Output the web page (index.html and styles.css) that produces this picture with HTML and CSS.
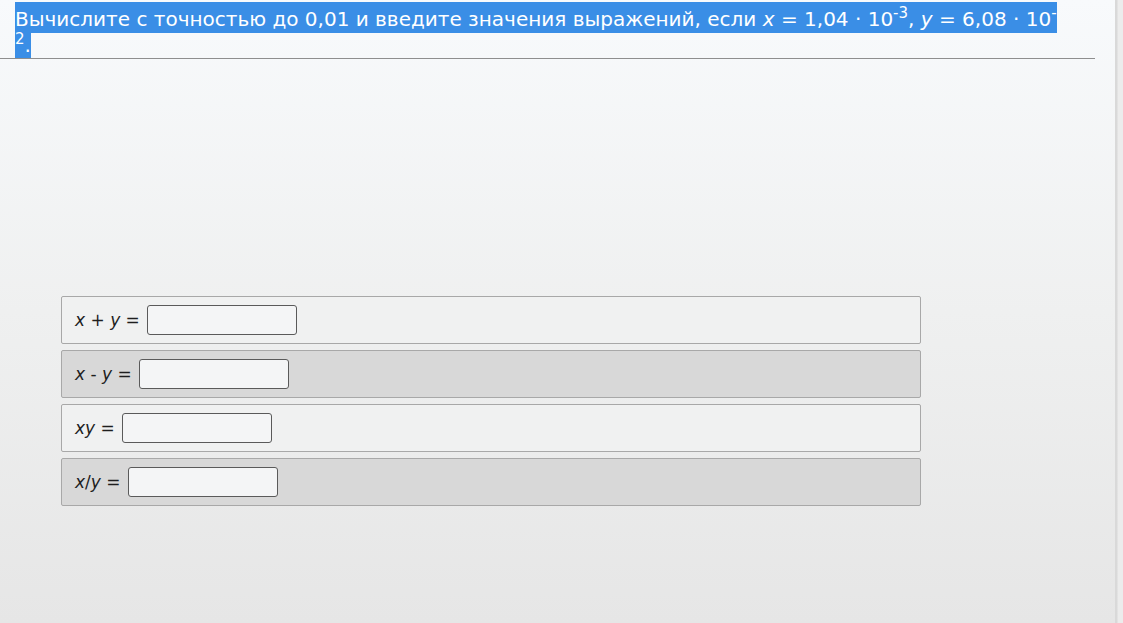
FILE: index.html
```html
<!DOCTYPE html>
<html lang="ru">
<head>
<meta charset="utf-8">
<title>Задание</title>
<link rel="stylesheet" href="styles.css">
</head>
<body>
<div class="page">
  <div class="content">
    <div class="question">
      <p class="task"><span class="sel">Вычислите с точностью до 0,01 и введите значения выражений, если <i>x</i> = 1,04 · 10<sup>-3</sup>, <i>y</i> = 6,08 · 10<sup>-<br>2</sup>.</span></p>
    </div>
    <div class="answers">
      <div class="row odd"><span class="label"><i>x</i> + <i>y</i> =</span><span class="field"></span></div>
      <div class="row even"><span class="label"><i>x</i> - <i>y</i> =</span><span class="field"></span></div>
      <div class="row odd"><span class="label"><i>xy</i> =</span><span class="field"></span></div>
      <div class="row even"><span class="label"><i>x</i>/<i>y</i> =</span><span class="field"></span></div>
    </div>
  </div>
  <div class="edge"></div>
</div>
</body>
</html>
```
FILE: styles.css
```css
html, body {
  margin: 0;
  padding: 0;
}
body {
  width: 1123px;
  height: 623px;
  overflow: hidden;
  font-family: "DejaVu Sans", Verdana, sans-serif;
  background: #e9e9e9;
}
.page {
  display: flex;
  height: 623px;
}
.content {
  width: 1115px;
  height: 623px;
  background: linear-gradient(to bottom, #f8fafc 0%, #eff0f0 50%, #e6e6e6 100%);
}
.edge {
  width: 8px;
  height: 623px;
  background: linear-gradient(to right, #d9d9d9 0, #d9d9d9 2px, #ececec 3px, #ececec 100%);
}
.question {
  width: 1095px;
  height: 59px;
  box-sizing: border-box;
  border-bottom: 1px solid #8e8e8e;
  padding: 0 0 0 15px;
  overflow: hidden;
}
.task {
  margin: 0;
  font-size: 20px;
  line-height: 26px;
  color: #ffffff;
  padding-top: 6px;
}
.sel {
  background: #3a8ee6;
  padding: 5px 0 2px 0;
}
.task sup {
  font-size: 15px;
  line-height: 0;
  vertical-align: 8px;
}
.answers {
  margin: 237px 0 0 61px;
  display: flex;
  flex-direction: column;
  gap: 6px;
  width: 860px;
}
.row {
  box-sizing: border-box;
  height: 48px;
  border: 1px solid #a8a8a8;
  border-radius: 2px;
  display: flex;
  align-items: center;
  padding: 0 13px;
  font-size: 17px;
  color: #1e1e1e;
}
.row.odd {
  background: #f0f1f1;
}
.row.even {
  background: #d8d8d8;
}
.label {
  margin-right: 7px;
  white-space: pre;
}
.field {
  box-sizing: border-box;
  width: 150px;
  height: 30px;
  border: 1px solid #5a5a5a;
  border-radius: 3px;
  background: #f4f5f6;
}
```
